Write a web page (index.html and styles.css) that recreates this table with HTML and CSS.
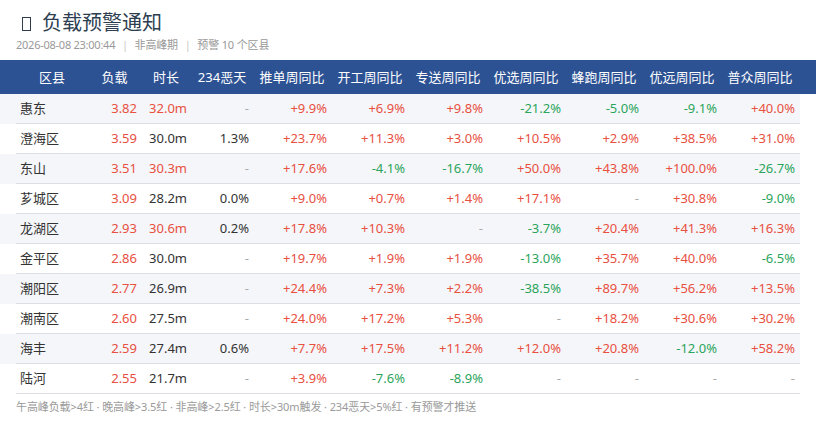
FILE: index.html
```html
<!DOCTYPE html>
<html lang="zh">
<head>
<meta charset="utf-8">
<link rel="stylesheet" href="styles.css">
</head>
<body>
<div class="page">
  <div class="title"><span class="tofu"></span><span>负载预警通知</span></div>
  <div class="sub"><span class="date">2026-08-08 23:00:44</span> <span class="sep">|</span> 非高峰期 <span class="sep">|</span> 预警 10 个区县</div>
  <div class="thead">
    <div class="grid">
      <div class="c">区县</div><div class="c">负载</div><div class="c">时长</div><div class="c">234恶天</div><div class="c">推单周同比</div><div class="c">开工周同比</div><div class="c">专送周同比</div><div class="c">优选周同比</div><div class="c">蜂跑周同比</div><div class="c">优远周同比</div><div class="c">普众周同比</div>
    </div>
  </div>
  <div class="tbody">
    <div class="row odd"><div class="grid"><div class="n">惠东</div><div class="r">3.82</div><div class="r">32.0m</div><div class="d">-</div><div class="r">+9.9%</div><div class="r">+6.9%</div><div class="r">+9.8%</div><div class="g">-21.2%</div><div class="g">-5.0%</div><div class="g">-9.1%</div><div class="r">+40.0%</div></div></div>
    <div class="row"><div class="grid"><div class="n">澄海区</div><div class="r">3.59</div><div class="k">30.0m</div><div class="k">1.3%</div><div class="r">+23.7%</div><div class="r">+11.3%</div><div class="r">+3.0%</div><div class="r">+10.5%</div><div class="r">+2.9%</div><div class="r">+38.5%</div><div class="r">+31.0%</div></div></div>
    <div class="row odd"><div class="grid"><div class="n">东山</div><div class="r">3.51</div><div class="r">30.3m</div><div class="d">-</div><div class="r">+17.6%</div><div class="g">-4.1%</div><div class="g">-16.7%</div><div class="r">+50.0%</div><div class="r">+43.8%</div><div class="r">+100.0%</div><div class="g">-26.7%</div></div></div>
    <div class="row"><div class="grid"><div class="n">芗城区</div><div class="r">3.09</div><div class="k">28.2m</div><div class="k">0.0%</div><div class="r">+9.0%</div><div class="r">+0.7%</div><div class="r">+1.4%</div><div class="r">+17.1%</div><div class="d">-</div><div class="r">+30.8%</div><div class="g">-9.0%</div></div></div>
    <div class="row odd"><div class="grid"><div class="n">龙湖区</div><div class="r">2.93</div><div class="r">30.6m</div><div class="k">0.2%</div><div class="r">+17.8%</div><div class="r">+10.3%</div><div class="d">-</div><div class="g">-3.7%</div><div class="r">+20.4%</div><div class="r">+41.3%</div><div class="r">+16.3%</div></div></div>
    <div class="row"><div class="grid"><div class="n">金平区</div><div class="r">2.86</div><div class="k">30.0m</div><div class="d">-</div><div class="r">+19.7%</div><div class="r">+1.9%</div><div class="r">+1.9%</div><div class="g">-13.0%</div><div class="r">+35.7%</div><div class="r">+40.0%</div><div class="g">-6.5%</div></div></div>
    <div class="row odd"><div class="grid"><div class="n">潮阳区</div><div class="r">2.77</div><div class="k">26.9m</div><div class="d">-</div><div class="r">+24.4%</div><div class="r">+7.3%</div><div class="r">+2.2%</div><div class="g">-38.5%</div><div class="r">+89.7%</div><div class="r">+56.2%</div><div class="r">+13.5%</div></div></div>
    <div class="row"><div class="grid"><div class="n">潮南区</div><div class="r">2.60</div><div class="k">27.5m</div><div class="d">-</div><div class="r">+24.0%</div><div class="r">+17.2%</div><div class="r">+5.3%</div><div class="d">-</div><div class="r">+18.2%</div><div class="r">+30.6%</div><div class="r">+30.2%</div></div></div>
    <div class="row odd"><div class="grid"><div class="n">海丰</div><div class="r">2.59</div><div class="k">27.4m</div><div class="k">0.6%</div><div class="r">+7.7%</div><div class="r">+17.5%</div><div class="r">+11.2%</div><div class="r">+12.0%</div><div class="r">+20.8%</div><div class="g">-12.0%</div><div class="r">+58.2%</div></div></div>
    <div class="row"><div class="grid"><div class="n">陆河</div><div class="r">2.55</div><div class="k">21.7m</div><div class="d">-</div><div class="r">+3.9%</div><div class="g">-7.6%</div><div class="g">-8.9%</div><div class="d">-</div><div class="d">-</div><div class="d">-</div><div class="d">-</div></div></div>
  </div>
  <div class="foot">午高峰负载&gt;4红 · 晚高峰&gt;3.5红 · 非高峰&gt;2.5红 · 时长&gt;30m触发 · 234恶天&gt;5%红 · 有预警才推送</div>
</div>
</body>
</html>
```
FILE: styles.css
```css
html, body {
  margin: 0;
  padding: 0;
  background: #ffffff;
}
.page {
  width: 816px;
  padding-top: 10px;
  font-family: "Noto Sans", "Noto Sans CJK SC", sans-serif;
  color: #333333;
}
.title {
  display: flex;
  align-items: center;
  height: 26px;
  padding-left: 22px;
  font-size: 20px;
  color: #2c3e50;
  line-height: 26px;
}
.tofu {
  width: 7px;
  height: 12px;
  border: 1.5px solid #2c3e50;
  margin-right: 11px;
  margin-top: 1px;
}
.sub {
  margin-top: 1px;
  padding-left: 16px;
  font-size: 11px;
  line-height: 16px;
  color: #999999;
  margin-bottom: 7px;
  letter-spacing: -0.15px;
}
.date {
  letter-spacing: -0.25px;
}
.sep {
  color: #c8c8c8;
  margin: 0 4px;
}
.grid {
  display: grid;
  grid-template-columns: 72px 53px 50px 62px repeat(7, 78px);
  width: 783px;
}
.grid > div {
  padding: 0 4px;
  text-align: right;
  white-space: nowrap;
}
.thead {
  background: #2d5294;
  color: #ffffff;
  height: 34px;
  padding-left: 16px;
  font-size: 13px;
  line-height: 34px;
}
.thead .grid > .c {
  text-align: center;
}
.row {
  width: 784px;
  padding-left: 16px;
  font-size: 13px;
}
.row.odd {
  background: #f5f6fa;
}
.row .grid {
  height: 29px;
  line-height: 29px;
  border-bottom: 1px solid #dcdee5;
  width: 784px;
}
.grid > .n {
  text-align: left;
  color: #333333;
}
.r { color: #e8503f; }
.g { color: #2ba55b; }
.k { color: #333333; }
.d { color: #aaaaaa; }
.foot {
  margin-top: 5px;
  padding-left: 16px;
  font-size: 11px;
  line-height: 16px;
  color: #9a9a9a;
  letter-spacing: -0.1px;
}
```
